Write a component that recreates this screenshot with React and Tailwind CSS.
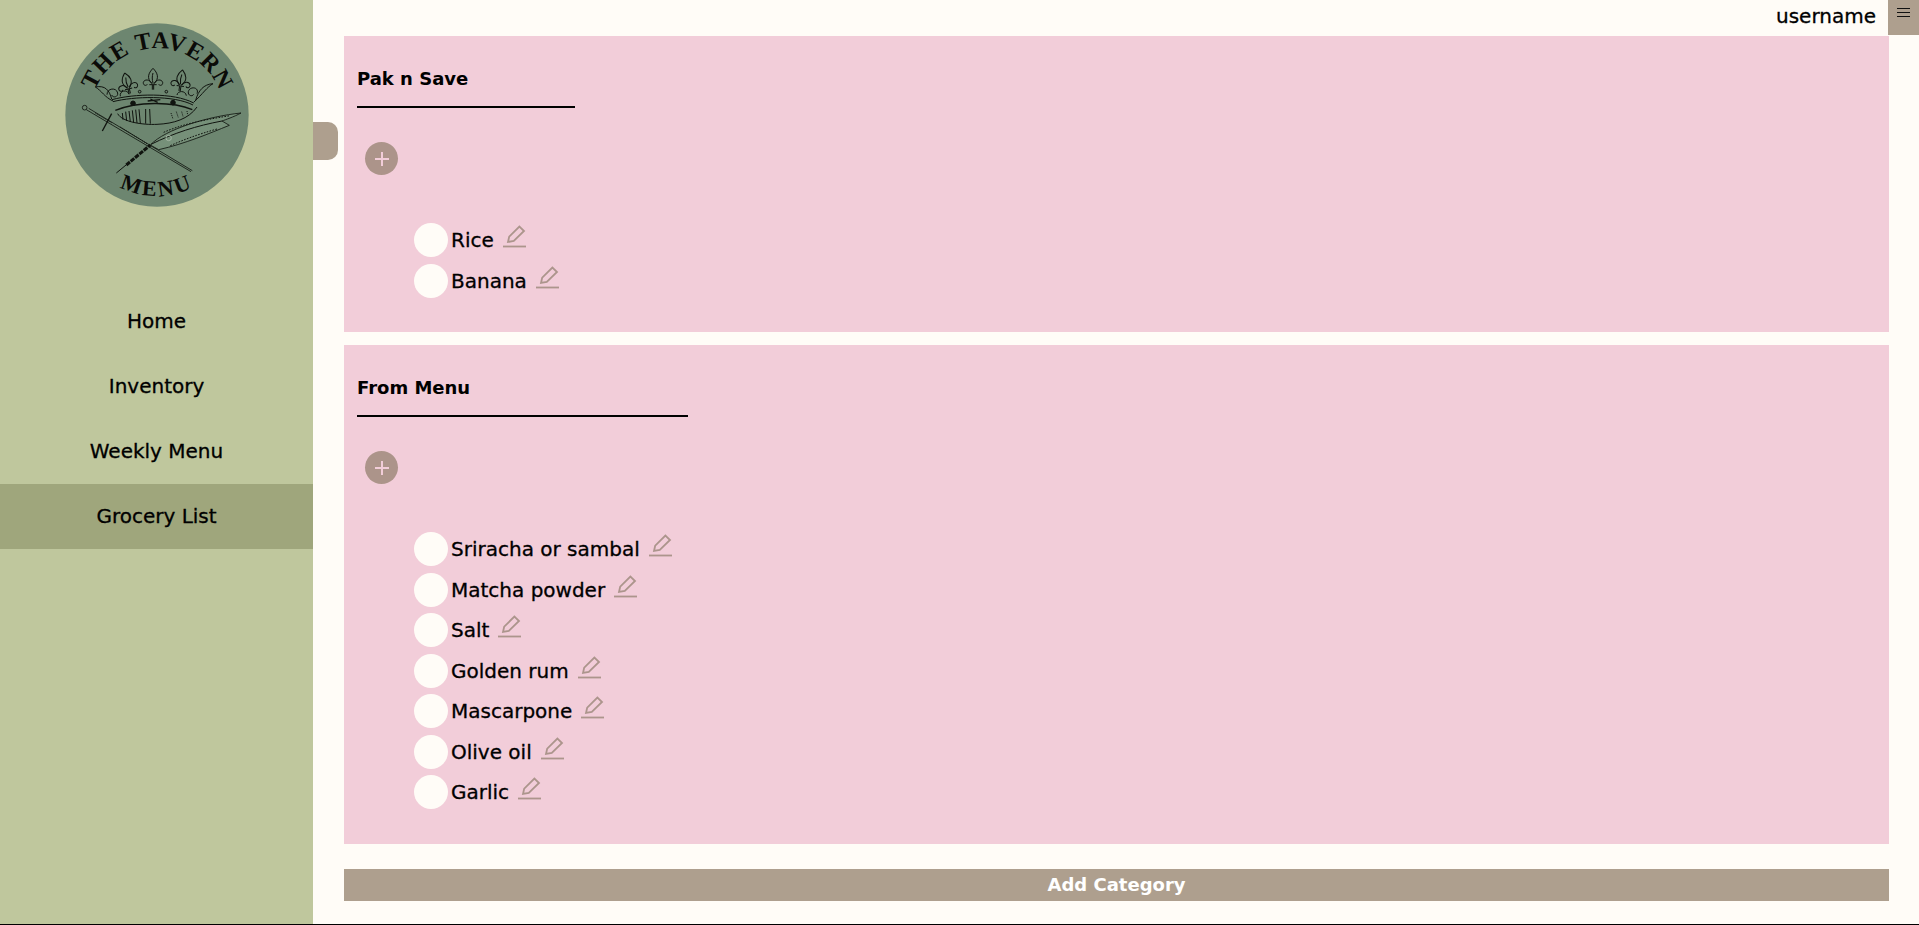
import React from "react";

const font = { fontFamily: '"DejaVu Sans", "Noto Sans", sans-serif' };

function Fleur({ x, y, angle = 0 }) {
  return (
    <g transform={`translate(${x} ${y}) rotate(${angle})`}>
      <path d="M0 -62 C-14 -48 -20 -32 -3 -16 M0 -62 C14 -48 20 -32 3 -16 M0 -48 C-3 -38 -3 -28 0 -18" />
      <path d="M-3 -16 C-10 -30 -26 -30 -29 -20 C-30 -11 -21 -8 -17 -14 M3 -16 C10 -30 26 -30 29 -20 C30 -11 21 -8 17 -14" />
      <path d="M-11 -13 H11 M-2 -12 V2 M2 -12 V2" strokeWidth="3" />
    </g>
  );
}

function Logo() {
  return (
    <svg viewBox="75 70 550 552" className="w-[184px] h-[184px] block" fill="none" stroke="#10140f">
      <circle cx="350" cy="346" r="275" fill="#6d8670" stroke="none" />
      <defs>
        <path id="logo-top" d="M 161 415 A 201 201 0 1 1 539 415" />
        <path id="logo-bottom" d="M 139 468 A 244 244 0 0 0 561 468" />
      </defs>
      <text fill="#0b0b08" stroke="none" fontFamily='"Liberation Serif", serif' fontWeight="700" fontSize="72">
        <textPath href="#logo-top" startOffset="50%" textAnchor="middle" textLength="480" lengthAdjust="spacing">THE TAVERN</textPath>
      </text>
      <text fill="#0b0b08" stroke="none" fontFamily='"Liberation Serif", serif' fontWeight="700" fontSize="66">
        <textPath href="#logo-bottom" startOffset="50%" textAnchor="middle" letterSpacing="8">MENU</textPath>
      </text>

      {/* crown */}
      <g strokeWidth="3">
        <Fleur x={338} y={268} />
        <Fleur x={268} y={280} angle={-14} />
        <Fleur x={418} y={272} angle={8} />
        <path d="M165 262 C195 256 207 272 214 298 M165 262 C185 274 192 292 218 304" />
        <path d="M518 252 C490 254 474 272 466 302 M518 252 C500 262 488 282 460 308" />
        <path d="M200 285 C200 265 228 262 232 280 C234 292 218 296 214 286 M240 290 C236 272 262 268 266 284 M470 282 C478 262 448 258 444 276 C442 288 456 292 460 284 M410 286 C412 272 436 272 438 288" />
        <circle cx="298" cy="276" r="4" />
        <circle cx="378" cy="276" r="4" />
        <path d="M215 300 C280 282 400 278 460 310 M218 306 C280 290 400 286 458 316" />
        <path d="M225 332 C290 306 395 304 456 330" strokeWidth="4" />
        <circle cx="278" cy="311" r="7" fill="#10140f" />
        <circle cx="398" cy="309" r="7" fill="#10140f" />
        <path d="M322 304 L360 300 M330 298 L352 308" strokeWidth="4" />
        <path d="M232 342 C246 368 310 376 350 374 C400 372 445 358 470 322" />
        <path d="M246 340 L248 360 M256 336 L259 364 M266 334 L270 367 M276 332 L280 369 M286 330 L290 370 M296 329 L300 371 M316 328 L316 372 M328 328 L330 372" />
        <path d="M392 340 L398 358 M408 336 L414 354 M424 336 L428 350 M440 334 L442 346" strokeDasharray="3 3" />
      </g>

      {/* sword */}
      <g strokeWidth="2.5">
        <circle cx="133" cy="324" r="7" />
        <path d="M138 330 L452 516 M145 326 L456 513" />
        <path d="M214 342 L186 394" strokeWidth="4" />
        <path d="M165 340 L215 370 M240 382 L320 432" strokeWidth="3" strokeDasharray="4 3" />
      </g>

      {/* quill */}
      <g strokeWidth="2.5">
        <path d="M330 436 C375 388 505 350 602 340 C580 352 555 360 545 364 L567 377 C505 402 435 432 355 450 Z" fill="#769079" />
        <path d="M332 434 C400 400 470 378 545 364" strokeWidth="3" />
        <path d="M370 398 C420 376 480 362 570 348 M390 438 C430 420 470 405 530 388" strokeDasharray="5 4" strokeWidth="3" />
        <circle cx="385" cy="415" r="8" stroke="#a9baa8" />
        <path d="M258 496 L330 436" strokeWidth="9" strokeDasharray="14 3" />
        <path d="M228 520 L262 492" strokeWidth="3" />
      </g>
    </svg>
  );
}

function PencilIcon() {
  return (
    <svg viewBox="0 0 23 23" className="w-[23px] h-[23px] shrink-0 -mt-[7px]" fill="none" stroke="#ac958c">
      <path d="M5 17 L6.2 11.6 L16.4 1.6 L21 6 L10.8 16 Z" strokeWidth="1.8" />
      <path d="M0 21.5 H23" strokeWidth="1.8" />
    </svg>
  );
}

function Item({ name }) {
  return (
    <li className="flex items-center h-[40.5px]">
      <span className="w-[34px] h-[34px] rounded-full bg-[#fffcf7] mr-[3px] shrink-0" />
      <span className="text-[20px] text-black mr-[9px] [-webkit-text-stroke:0.3px_black]">{name}</span>
      <PencilIcon />
    </li>
  );
}

function Category({ title, lineClass, items }) {
  return (
    <section className="bg-[#f2cdd9] pl-[13px] pb-[31px] mb-[13px]">
      <h2 className={"h-[72px] pt-[28px] text-[18px] leading-[30px] font-bold text-black border-b-2 border-black " + lineClass}>
        {title}
      </h2>
      <button className="flex items-center justify-center w-[33px] h-[33px] ml-[8px] mt-[34px] rounded-full bg-[#ac948a]">
        <svg viewBox="0 0 16 16" className="w-[16px] h-[16px]" stroke="#f2cdd9" strokeWidth="2">
          <path d="M8 1 V15 M1 8 H15" />
        </svg>
      </button>
      <ul className="mt-[45px] ml-[57px]">
        {items.map((name) => (
          <Item key={name} name={name} />
        ))}
      </ul>
    </section>
  );
}

const navItems = ["Home", "Inventory", "Weekly Menu", "Grocery List"];

export default function App() {
  return (
    <div className="relative flex h-[925px] border-b border-black bg-[#fffcf7] overflow-hidden" style={font}>
      <aside className="w-[313px] shrink-0 bg-[#bfc79d]">
        <div className="h-[289px] pt-[23px] pl-[65px]">
          <Logo />
        </div>
        <nav>
          {navItems.map((label) => (
            <a
              key={label}
              className={
                "flex items-center justify-center h-[65px] pb-[2px] text-[20px] text-black [-webkit-text-stroke:0.3px_black] " +
                (label === "Grocery List" ? "bg-[#9fa67c]" : "")
              }
            >
              {label}
            </a>
          ))}
        </nav>
      </aside>

      <div className="absolute left-[313px] top-[122px] w-[25px] h-[38px] rounded-r-[10px] bg-[#ae9f8e]" />

      <main className="flex-1 min-w-0">
        <header className="flex justify-end items-start h-[36px]">
          <span className="text-[20px] leading-[32px] text-black mr-[12px] [-webkit-text-stroke:0.3px_black]">username</span>
          <button className="flex justify-center pt-[8px] w-[31px] h-[35px] bg-[#ae9f8e]">
            <svg viewBox="0 0 13 9" className="w-[13px] h-[9px]" stroke="#111" strokeWidth="1">
              <path d="M0 .5 H13 M0 4.5 H13 M0 8.5 H13" />
            </svg>
          </button>
        </header>
        <div className="pl-[31px] pr-[30px]">
          <Category title="Pak n Save" lineClass="w-[218px]" items={["Rice", "Banana"]} />
          <Category
            title="From Menu"
            lineClass="w-[331px]"
            items={["Sriracha or sambal", "Matcha powder", "Salt", "Golden rum", "Mascarpone", "Olive oil", "Garlic"]}
          />
          <button className="block w-full h-[32px] mt-[25px] bg-[#ae9f8e] text-[18px] leading-[30px] font-bold text-white">
            Add Category
          </button>
        </div>
      </main>
    </div>
  );
}
